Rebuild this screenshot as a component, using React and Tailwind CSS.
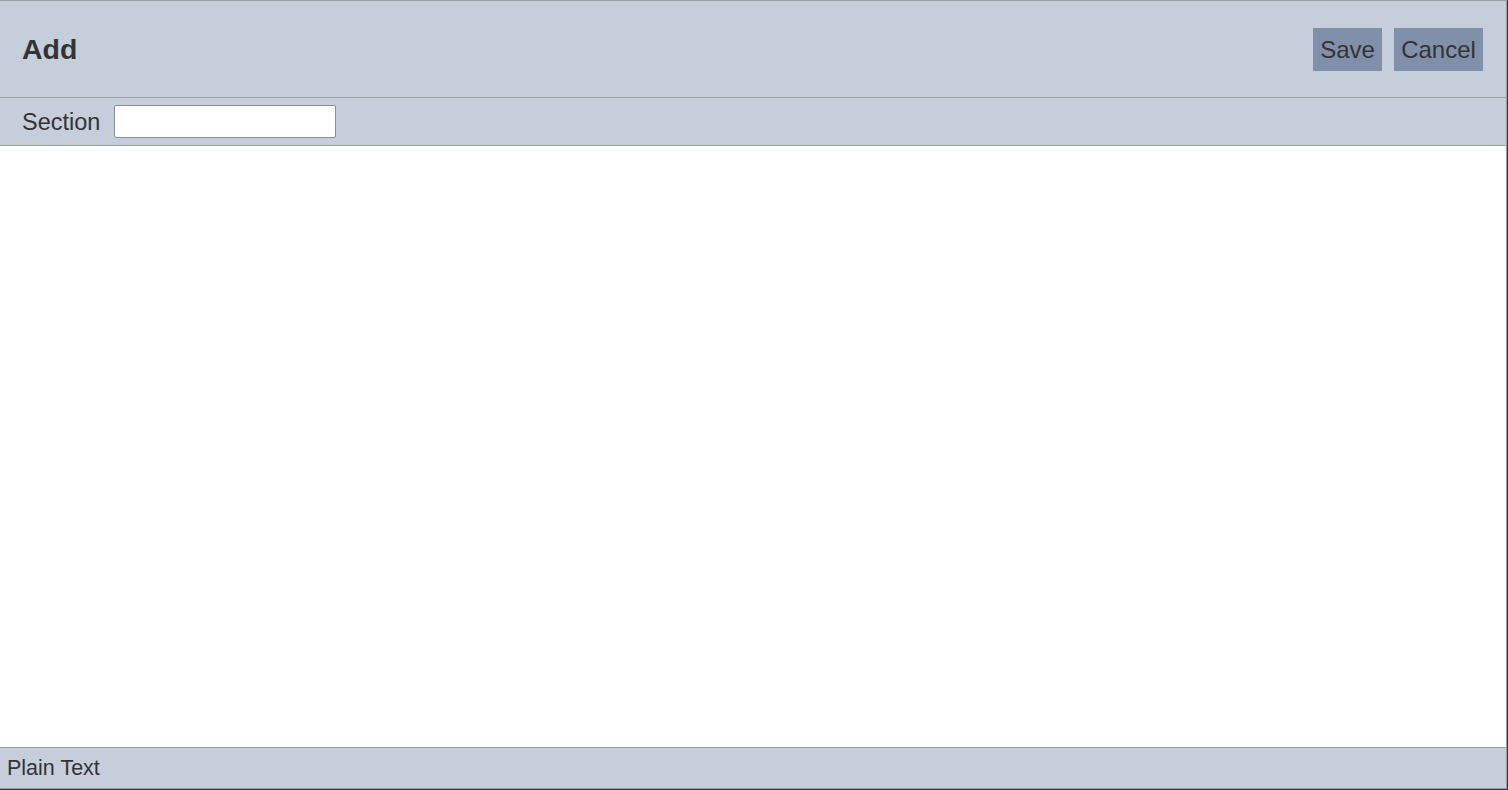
import React from "react";

const font = { fontFamily: '"Liberation Sans", Arial, sans-serif' };

export default function App() {
  return (
    <div className="h-[790px] w-full bg-[#1d4048] pb-px pr-px" style={font}>
      <div className="flex h-full flex-col border-b border-r border-t border-[#9b9da1] bg-white text-[#333333]">
        <header className="flex h-[97px] shrink-0 items-center justify-between border-b border-[#9b9da1] bg-[#c6cedb] pl-[22px] pr-[23px]">
          <h1 className="text-[28.5px] font-bold">Add</h1>
          <div className="flex items-center gap-3 pt-px">
            <button className="h-[43px] w-[69px] bg-[#8190aa] text-[24px] text-[#333333]">Save</button>
            <button className="h-[43px] w-[89px] bg-[#8190aa] text-[24px] text-[#333333]">Cancel</button>
          </div>
        </header>
        <div className="flex h-[48px] shrink-0 items-center gap-[14px] border-b border-[#9b9da1] bg-[#c6cedb] pl-[22px]">
          <label className="pt-[2px] text-[23.5px]">Section</label>
          <input
            type="text"
            className="h-[33px] w-[222px] rounded-[2px] border border-[#8a8d93] bg-white px-1 text-[16px] outline-none"
          />
        </div>
        <main className="flex-1 bg-white" />
        <footer className="flex h-[41px] shrink-0 items-center border-t border-[#9b9da1] bg-[#c6cedb] pl-[7px] text-[21.5px]">
          Plain Text
        </footer>
      </div>
    </div>
  );
}
